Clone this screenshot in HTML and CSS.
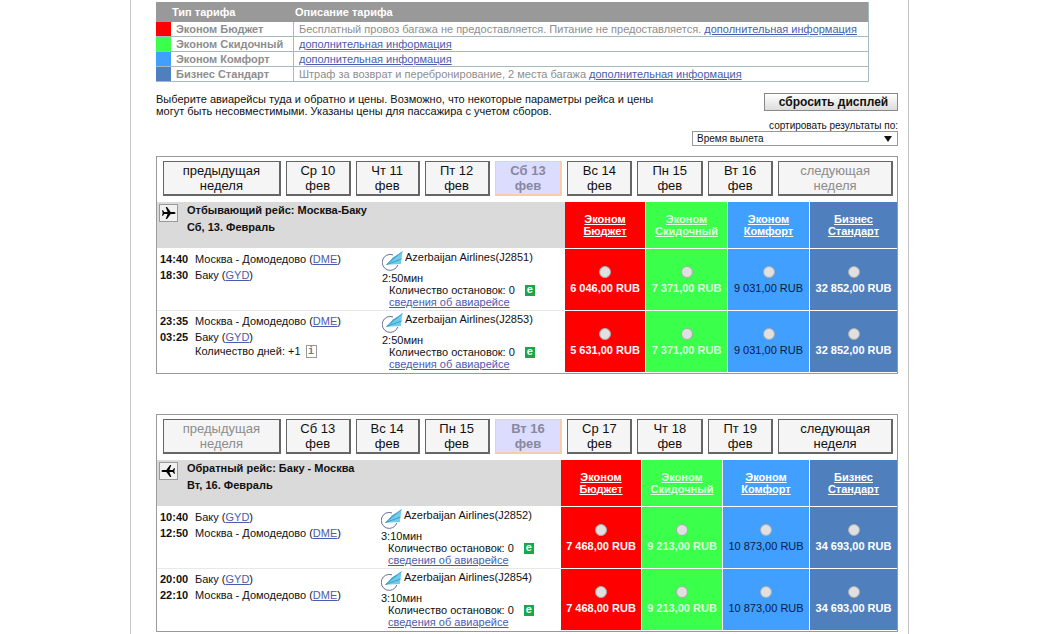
FILE: index.html
```html
<!DOCTYPE html>
<html lang="ru">
<head>
<meta charset="utf-8">
<title>Выбор рейсов</title>
<link rel="stylesheet" href="styles.css">
</head>
<body>
<svg class="defs" aria-hidden="true">
  <symbol id="plane" viewBox="0 0 17 16">
    <path d="M15.500 8c0-.6-.8-1-1.800-1h-3L7 2H5.700L7.600 7H4.200L3 5.300H2L2.700 8 2 10.700h1L4.200 9h3.400L5.700 14H7l3.700-5h3c1 0 1.800-.4 1.800-1z"/>
  </symbol>
  <symbol id="azal" viewBox="0 0 21 21">
    <path d="M11 3.900A8 8 0 1 0 15.800 14" fill="none" stroke="#66719c" stroke-width="1"/>
    <path d="M20.500 .5L11 6.500 4.500 13.500z" fill="#2da3d6"/>
    <path d="M20.500 .5L18.800 13 4.500 13.700z" fill="#6fcdea"/>
    <path d="M20.500 .5L4.500 13.600M19.500 8L4.500 13.600" fill="none" stroke="#2b93c4" stroke-width=".8"/>
  </symbol>
</svg>
<main class="page">
  <table class="tariffs">
    <colgroup><col class="c-swatch"><col class="c-name"><col></colgroup>
    <thead><tr><th colspan="2">Тип тарифа</th><th>Описание тарифа</th></tr></thead>
    <tbody>
      <tr><td class="red"></td><th scope="row">Эконом Бюджет</th><td>Бесплатный провоз багажа не предоставляется. Питание не предоставляется. <a href="#">дополнительная информация</a></td></tr>
      <tr><td class="green"></td><th scope="row">Эконом Скидочный</th><td><a href="#">дополнительная информация</a></td></tr>
      <tr><td class="blue"></td><th scope="row">Эконом Комфорт</th><td><a href="#">дополнительная информация</a></td></tr>
      <tr><td class="navy"></td><th scope="row">Бизнес Стандарт</th><td>Штраф за возврат и перебронирование, 2 места багажа <a href="#">дополнительная информация</a></td></tr>
    </tbody>
  </table>

  <div class="toolbar">
    <p class="hint">Выберите авиарейсы туда и обратно и цены. Возможно, что некоторые параметры рейса и цены могут быть несовместимыми. Указаны цены для пассажира с учетом сборов.</p>
    <div class="controls">
      <button type="button" class="reset">сбросить дисплей</button>
      <label for="sort">сортировать результаты по:</label>
      <div class="select"><select id="sort"><option>Время вылета</option></select></div>
    </div>
  </div>

  <section class="panel">
    <nav class="week">
      <button type="button">предыдущая<br>неделя</button>
      <button type="button">Ср 10<br>фев</button>
      <button type="button">Чт 11<br>фев</button>
      <button type="button">Пт 12<br>фев</button>
      <button type="button" class="active">Сб 13<br>фев</button>
      <button type="button">Вс 14<br>фев</button>
      <button type="button">Пн 15<br>фев</button>
      <button type="button">Вт 16<br>фев</button>
      <button type="button" class="muted">следующая<br>неделя</button>
    </nav>
    <table class="flights outbound">
      <colgroup><col class="c-route"><col><col class="c-red"><col class="c-green"><col class="c-blue"><col class="c-navy"></colgroup>
      <thead>
        <tr>
          <th colspan="2" class="title"><div class="title-box"><span class="plane"><svg><use href="#plane"/></svg></span><span>Отбывающий рейс: Москва-Баку<br>Сб, 13. Февраль</span></div></th>
          <th class="red"><a href="#">Эконом<br>Бюджет</a></th>
          <th class="green"><a href="#">Эконом<br>Скидочный</a></th>
          <th class="blue"><a href="#">Эконом<br>Комфорт</a></th>
          <th class="navy"><a href="#">Бизнес<br>Стандарт</a></th>
        </tr>
      </thead>
      <tbody>
        <tr>
          <td class="info"><div class="route"><b>14:40</b><span>Москва - Домодедово (<a href="#">DME</a>)</span><b>18:30</b><span>Баку (<a href="#">GYD</a>)</span></div></td>
          <td class="info"><div class="airline"><svg class="logo"><use href="#azal"/></svg><span>Azerbaijan Airlines(J2851)</span></div><div>2:50мин</div><div class="detail">Количество остановок: 0<span class="eticket">e</span></div><div class="detail"><a href="#">сведения об авиарейсе</a></div></td>
          <td class="red"><label class="fare"><input type="radio" name="out">6 046,00 RUB</label></td>
          <td class="green"><label class="fare"><input type="radio" name="out">7 371,00 RUB</label></td>
          <td class="blue"><label class="fare"><input type="radio" name="out">9 031,00 RUB</label></td>
          <td class="navy"><label class="fare"><input type="radio" name="out">32 852,00 RUB</label></td>
        </tr>
        <tr>
          <td class="info"><div class="route"><b>23:35</b><span>Москва - Домодедово (<a href="#">DME</a>)</span><b>03:25</b><span>Баку (<a href="#">GYD</a>)</span><span class="days">Количество дней: +1<i class="note">i</i></span></div></td>
          <td class="info"><div class="airline"><svg class="logo"><use href="#azal"/></svg><span>Azerbaijan Airlines(J2853)</span></div><div>2:50мин</div><div class="detail">Количество остановок: 0<span class="eticket">e</span></div><div class="detail"><a href="#">сведения об авиарейсе</a></div></td>
          <td class="red"><label class="fare"><input type="radio" name="out">5 631,00 RUB</label></td>
          <td class="green"><label class="fare"><input type="radio" name="out">7 371,00 RUB</label></td>
          <td class="blue"><label class="fare"><input type="radio" name="out">9 031,00 RUB</label></td>
          <td class="navy"><label class="fare"><input type="radio" name="out">32 852,00 RUB</label></td>
        </tr>
      </tbody>
    </table>
  </section>

  <section class="panel">
    <nav class="week">
      <button type="button" class="muted">предыдущая<br>неделя</button>
      <button type="button">Сб 13<br>фев</button>
      <button type="button">Вс 14<br>фев</button>
      <button type="button">Пн 15<br>фев</button>
      <button type="button" class="active">Вт 16<br>фев</button>
      <button type="button">Ср 17<br>фев</button>
      <button type="button">Чт 18<br>фев</button>
      <button type="button">Пт 19<br>фев</button>
      <button type="button">следующая<br>неделя</button>
    </nav>
    <table class="flights inbound">
      <colgroup><col class="c-route"><col><col class="c-red"><col class="c-green"><col class="c-blue"><col class="c-navy"></colgroup>
      <thead>
        <tr>
          <th colspan="2" class="title"><div class="title-box"><span class="plane back"><svg><use href="#plane"/></svg></span><span>Обратный рейс: Баку - Москва<br>Вт, 16. Февраль</span></div></th>
          <th class="red"><a href="#">Эконом<br>Бюджет</a></th>
          <th class="green"><a href="#">Эконом<br>Скидочный</a></th>
          <th class="blue"><a href="#">Эконом<br>Комфорт</a></th>
          <th class="navy"><a href="#">Бизнес<br>Стандарт</a></th>
        </tr>
      </thead>
      <tbody>
        <tr>
          <td class="info"><div class="route"><b>10:40</b><span>Баку (<a href="#">GYD</a>)</span><b>12:50</b><span>Москва - Домодедово (<a href="#">DME</a>)</span></div></td>
          <td class="info"><div class="airline"><svg class="logo"><use href="#azal"/></svg><span>Azerbaijan Airlines(J2852)</span></div><div>3:10мин</div><div class="detail">Количество остановок: 0<span class="eticket">e</span></div><div class="detail"><a href="#">сведения об авиарейсе</a></div></td>
          <td class="red"><label class="fare"><input type="radio" name="back">7 468,00 RUB</label></td>
          <td class="green"><label class="fare"><input type="radio" name="back">9 213,00 RUB</label></td>
          <td class="blue"><label class="fare"><input type="radio" name="back">10 873,00 RUB</label></td>
          <td class="navy"><label class="fare"><input type="radio" name="back">34 693,00 RUB</label></td>
        </tr>
        <tr>
          <td class="info"><div class="route"><b>20:00</b><span>Баку (<a href="#">GYD</a>)</span><b>22:10</b><span>Москва - Домодедово (<a href="#">DME</a>)</span></div></td>
          <td class="info"><div class="airline"><svg class="logo"><use href="#azal"/></svg><span>Azerbaijan Airlines(J2854)</span></div><div>3:10мин</div><div class="detail">Количество остановок: 0<span class="eticket">e</span></div><div class="detail"><a href="#">сведения об авиарейсе</a></div></td>
          <td class="red"><label class="fare"><input type="radio" name="back">7 468,00 RUB</label></td>
          <td class="green"><label class="fare"><input type="radio" name="back">9 213,00 RUB</label></td>
          <td class="blue"><label class="fare"><input type="radio" name="back">10 873,00 RUB</label></td>
          <td class="navy"><label class="fare"><input type="radio" name="back">34 693,00 RUB</label></td>
        </tr>
      </tbody>
    </table>
  </section>
</main>
</body>
</html>
```
FILE: styles.css
```css
* { box-sizing: border-box; }
body {
  margin: 0;
  padding: 0 132px 0 130px;
  background: #fff;
  color: #111;
  font: 11px/12px "Liberation Sans", Arial, sans-serif;
}
a { color: #4a5cae; }
table { border-collapse: separate; border-spacing: 0; }
th, td { padding: 0; text-align: left; }
.defs { display: none; }

.page {
  min-height: 100vh;
  padding: 2px 10px 2px 25px;
  border: solid #c4c6c8;
  border-width: 0 1px;
}

.red { background: #fe0000; }
.green { background: #3aff4b; }
.blue { background: #409fff; }
.navy { background: #4f80bd; }

/* Tariff legend */
.tariffs {
  width: calc(100% - 29px);
  table-layout: fixed;
  border-right: 1px solid #a6b9c0;
  color: #8e8e8e;
}
.c-swatch { width: 15px; }
.c-name { width: 123px; }
.tariffs thead th { height: 20px; background: #999; color: #fff; }
.tariffs thead th:first-child { padding-left: 16px; }
.tariffs thead th:last-child { padding-left: 1px; }
.tariffs tbody th, .tariffs tbody td {
  height: 15px;
  border-bottom: 1px solid #a6b9c0;
  white-space: nowrap;
}
.tariffs tbody th { padding-left: 5px; border-right: 1px solid #a6b9c0; }
.tariffs tbody td { padding-left: 5px; border-right: 0; }

/* Hint and sorting */
.toolbar { display: flex; justify-content: space-between; margin: 11px 0 10px; }
.hint { margin: 0; max-width: 520px; }
.controls {
  display: flex;
  flex-direction: column;
  align-items: flex-end;
  width: 206px;
  font-size: 10px;
}
.reset {
  height: 18px;
  margin-bottom: 9px;
  padding: 0 6px 0 11px;
  min-width: 134px;
  border: 1px solid #888;
  background: linear-gradient(#fff, #dcdcdc);
  color: #111;
  font: bold 12px/16px "Liberation Sans", Arial, sans-serif;
}
.controls label { height: 11px; }
.select { display: grid; width: 100%; }
.select select {
  grid-area: 1 / 1;
  height: 15px;
  padding: 0 4px;
  border: 1px solid #999;
  border-radius: 0;
  appearance: none;
  background: #fff;
  color: #111;
  font: 10px/12px "Liberation Sans", Arial, sans-serif;
}
.select::after {
  content: "";
  grid-area: 1 / 1;
  place-self: center end;
  margin-right: 6px;
  border: solid transparent;
  border-width: 6px 4px 0;
  border-top-color: #111;
  pointer-events: none;
}

/* Flight panels */
.panel { margin-bottom: 40px; border: 1px solid #999; }
.panel:last-child { margin-bottom: 0; }
.week {
  display: grid;
  grid-template-columns: 118fr 65fr 64fr 65fr 68fr 65fr 66fr 65fr 115fr;
  gap: 5px;
  padding: 4px 4px 6px 6px;
}
.week button {
  height: 35px;
  padding: 0;
  border: solid #666;
  border-width: 1px 2px 2px 1px;
  background: #f5f5f5;
  color: #111;
  font: 13px/15px "Liberation Sans", Arial, sans-serif;
}
.week .muted { color: #8c8c8c; }
.week .active { border-color: #fbcca8; background: #dcdcff; color: #8888a0; font-weight: bold; }

.flights { width: 100%; table-layout: fixed; }
.c-route { width: 225px; }
.c-red { width: 80px; }
.c-green, .c-blue { width: 82px; }
.c-navy { width: 88px; }
.inbound .c-route { width: 224px; }
.inbound .c-green { width: 81px; }
.inbound .c-blue { width: 87px; }
.flights th, .flights td { border-bottom: 1px solid #fff; }
.flights .green, .flights .blue, .flights .navy { border-left: 1px solid #fff; }
.flights thead th { height: 47px; text-align: center; }
.flights thead a { color: #fff; }
.flights thead .green a, .green .fare { color: #dcffdf; }
.flights thead .title {
  padding: 0 2px;
  background: #dadada;
  text-align: left;
  vertical-align: top;
}
.title-box { display: flex; gap: 9px; line-height: 17px; }
.plane {
  display: flex;
  width: 19px;
  height: 18px;
  margin-top: 2px;
  border: 1px solid #999;
  background: #f0f0f0;
}
.plane svg { width: 17px; height: 16px; }
.back { transform: scaleX(-1); }

.flights td { height: 62px; vertical-align: top; }
.flights .info { padding-top: 2px; border-bottom-color: #e8e8e8; }
.flights tbody tr:last-child .info { border-bottom-color: #fff; }
.route {
  display: grid;
  grid-template-columns: 35px 1fr;
  padding-left: 3px;
  line-height: 16px;
}
.days { grid-column: 2; display: flex; align-items: center; gap: 5px; height: 12px; line-height: 12px; }
.note {
  width: 11px;
  height: 13px;
  border: 1px solid #999;
  color: #777;
  font: bold 10px/11px "Liberation Mono", monospace;
  text-align: center;
}
.airline { display: flex; gap: 2px; height: 21px; }
.logo { width: 21px; height: 21px; }
.detail { display: flex; align-items: center; gap: 10px; padding-left: 7px; }
.eticket {
  width: 10px;
  height: 11px;
  background: #16a84b;
  color: #fff;
  font-weight: bold;
  line-height: 9px;
  text-align: center;
}
.fare {
  display: flex;
  flex-direction: column;
  align-items: center;
  gap: 3px;
  padding-top: 17px;
  color: #fff;
  font-weight: bold;
  white-space: nowrap;
}
.blue .fare { color: #0b1a3c; font-weight: normal; }
.fare input {
  width: 12px;
  height: 12px;
  margin: 0 0 1px;
  border: 1px solid #aaa;
  border-radius: 50%;
  appearance: none;
  background: #e0e0e0;
}
```
